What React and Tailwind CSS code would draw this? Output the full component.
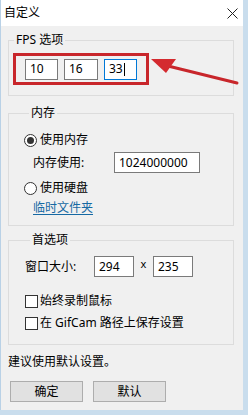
import React from "react";

const font = { fontFamily: '"Noto Sans", "Noto Sans CJK SC", sans-serif' };

function Box({ value, w = "w-[33px]", focused = false }) {
  return (
    <div
      className={`${w} h-[21px] bg-white border flex items-center pl-[4px] text-[12px] leading-none ${
        focused ? "border-[#0078d7]" : "border-[#7a7a7a]"
      }`}
    >
      {value}
      {focused && <span className="w-px h-[13px] bg-black ml-px" />}
    </div>
  );
}

function Radio({ checked, label }) {
  return (
    <div className="flex items-center h-[16px] gap-[3px]">
      <div className="w-[13px] h-[13px] rounded-full border border-[#333] bg-white flex items-center justify-center">
        {checked && <div className="w-[7px] h-[7px] rounded-full bg-[#333]" />}
      </div>
      <span className="text-[12px] leading-[16px]">{label}</span>
    </div>
  );
}

function Check({ label }) {
  return (
    <div className="flex items-center h-[16px] gap-[2px]">
      <div className="w-[13px] h-[13px] border border-[#333] bg-white" />
      <span className="text-[12px] leading-[16px]">{label}</span>
    </div>
  );
}

function Group({ title, className = "", children }) {
  return (
    <fieldset className={`w-[226px] border border-[#dcdcdc] ${className}`}>
      <legend className="ml-[5px] px-[2px] text-[12px] leading-[14px]">{title}</legend>
      {children}
    </fieldset>
  );
}

export default function App() {
  return (
    <div className="w-[248px] h-[415px] bg-[#c9dded] relative overflow-hidden text-black" style={font}>
      <div className="w-[243px] h-[410px] bg-[#f0f0f0] border-l border-[#b9d1e6]">
        {/* title bar */}
        <div className="h-[26px] bg-white flex items-center justify-between pl-[3px] pr-[5px]">
          <span className="text-[12px] leading-none">自定义</span>
          <svg width="11" height="11" viewBox="0 0 11 11">
            <path d="M0.5 0.5L10.5 10.5M10.5 0.5L0.5 10.5" stroke="#222" strokeWidth="1" />
          </svg>
        </div>

        <div className="pl-[7px]">
          <Group title="FPS 选项" className="mt-[7px] pb-[10px]">
            <div className="ml-[4px] mt-[6px] w-[136px] h-[32px] border-[3px] border-[#c8262b] flex items-center gap-[6px] pl-[9px]">
              <Box value="10" />
              <Box value="16" w="w-[34px]" />
              <Box value="33" focused />
            </div>
          </Group>

          <Group title="内存" className="mt-[10px] pb-[9px] pl-[15px]">
            <div className="mt-[12px]">
              <Radio checked label="使用内存" />
            </div>
            <div className="flex items-center mt-[4px] pl-[9px]">
              <span className="w-[81px] text-[12px] leading-[16px]">内存使用:</span>
              <Box value="1024000000" w="w-[86px]" />
            </div>
            <div className="mt-[7px]">
              <Radio label="使用硬盘" />
            </div>
            <div className="mt-[4px] pl-[9px] h-[16px] text-[12px] leading-[16px] text-[#1669a3] underline underline-offset-2">
              临时文件夹
            </div>
          </Group>

          <Group title="首选项" className="mt-[7px] pb-[13px] pl-[16px]">
            <div className="flex items-center mt-[9px]">
              <span className="w-[69px] text-[12px] leading-[16px]">窗口大小:</span>
              <Box value="294" w="w-[40px]" />
              <span className="w-[19px] text-center text-[11px] leading-none -mt-[6px]">x</span>
              <Box value="235" w="w-[40px]" />
            </div>
            <div className="mt-[16px]">
              <Check label="始终录制鼠标" />
            </div>
            <div className="mt-[6px]">
              <Check label="在 GifCam 路径上保存设置" />
            </div>
          </Group>

          <div className="mt-[9px] h-[16px] text-[12px] leading-[16px]">建议使用默认设置。</div>

          <div className="flex gap-[10px] mt-[11px] ml-[2px]">
            <div className="w-[73px] h-[21px] bg-[#e1e1e1] border border-[#adadad] flex items-center justify-center text-[12px] leading-none">
              确定
            </div>
            <div className="w-[73px] h-[21px] bg-[#e1e1e1] border border-[#adadad] flex items-center justify-center text-[12px] leading-none">
              默认
            </div>
          </div>
        </div>
      </div>

      {/* annotation arrow */}
      <svg className="absolute left-0 top-0" width="248" height="415" viewBox="0 0 248 415">
        <path d="M237 83L168 66" stroke="#c8262b" strokeWidth="3" strokeLinecap="round" />
        <path d="M151 59L176 59L166 73Z" fill="#d42a2f" />
      </svg>
    </div>
  );
}
